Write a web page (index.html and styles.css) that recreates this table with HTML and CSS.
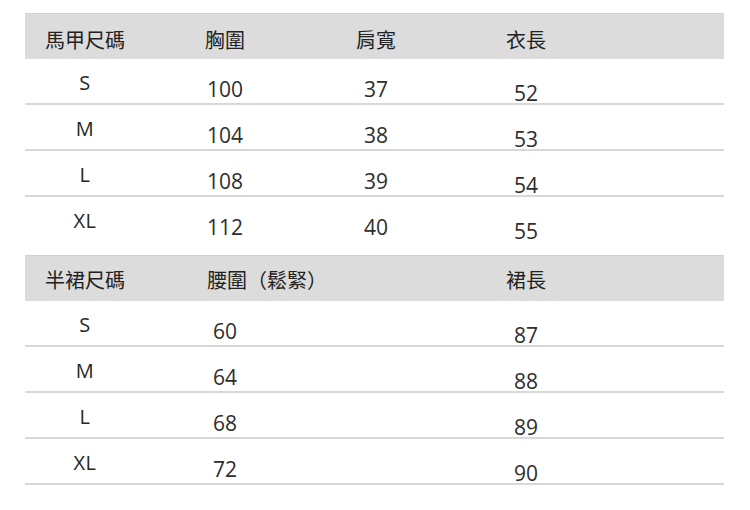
FILE: index.html
```html
<!DOCTYPE html>
<html lang="zh-Hant">
<head>
<meta charset="utf-8">
<title>尺碼表</title>
<link rel="stylesheet" href="styles.css">
</head>
<body>
<main class="sheet">
  <section class="chart chart-vest">
    <div class="row head">
      <span class="cell">馬甲尺碼</span>
      <span class="cell">胸圍</span>
      <span class="cell">肩寬</span>
      <span class="cell">衣長</span>
    </div>
    <div class="row">
      <span class="cell size">S</span>
      <span class="cell num">100</span>
      <span class="cell num">37</span>
      <span class="cell num low">52</span>
    </div>
    <div class="row">
      <span class="cell size">M</span>
      <span class="cell num">104</span>
      <span class="cell num">38</span>
      <span class="cell num low">53</span>
    </div>
    <div class="row">
      <span class="cell size">L</span>
      <span class="cell num">108</span>
      <span class="cell num">39</span>
      <span class="cell num low">54</span>
    </div>
    <div class="row last">
      <span class="cell size">XL</span>
      <span class="cell num">112</span>
      <span class="cell num">40</span>
      <span class="cell num low">55</span>
    </div>
  </section>

  <section class="chart chart-skirt">
    <div class="row head head-skirt">
      <span class="cell">半裙尺碼</span>
      <span class="cell waist">腰圍（鬆緊）</span>
      <span class="cell col4">裙長</span>
    </div>
    <div class="row">
      <span class="cell size">S</span>
      <span class="cell num">60</span>
      <span class="cell num low col4">87</span>
    </div>
    <div class="row">
      <span class="cell size">M</span>
      <span class="cell num">64</span>
      <span class="cell num low col4">88</span>
    </div>
    <div class="row">
      <span class="cell size">L</span>
      <span class="cell num">68</span>
      <span class="cell num low col4">89</span>
    </div>
    <div class="row">
      <span class="cell size">XL</span>
      <span class="cell num">72</span>
      <span class="cell num low col4">90</span>
    </div>
  </section>
</main>
</body>
</html>
```

FILE: styles.css
```css
html, body {
  margin: 0;
  padding: 0;
  background: #ffffff;
}

.sheet {
  display: flex;
  flex-direction: column;
  gap: 12px;
  width: 699px;
  margin-left: 25px;
  padding-top: 13px;
}

.chart {
  display: flex;
  flex-direction: column;
}

.row {
  display: grid;
  grid-template-columns: 120px 160px 142px 158px 1fr;
  align-items: start;
  height: 46px;
  box-sizing: border-box;
  border-bottom: 2px solid #d8d8d8;
}

.row.last {
  border-bottom: none;
}

.cell {
  text-align: center;
  white-space: nowrap;
}

.head {
  background: #dcdcdc;
  border-top: 1px solid #d1d1d1;
  border-bottom: none;
}

.head .cell {
  font-family: "Noto Sans CJK TC", "Noto Sans CJK SC", sans-serif;
  font-size: 20px;
  line-height: 20px;
  color: #222222;
  padding-top: 16px;
}

.head-skirt .cell {
  padding-top: 14px;
}

.head .waist {
  text-align: left;
  padding-left: 62px;
}

.col4 {
  grid-column: 4;
}

.size {
  font-family: "Open Sans", "Noto Sans", sans-serif;
  font-size: 20px;
  line-height: 20px;
  color: #262626;
  padding-top: 14px;
  letter-spacing: 0.5px;
}

.num {
  font-family: "Open Sans", "Noto Sans", sans-serif;
  font-size: 21px;
  line-height: 21px;
  color: #2e2e2e;
  padding-top: 20px;
}

.num.low {
  padding-top: 24px;
}
```
